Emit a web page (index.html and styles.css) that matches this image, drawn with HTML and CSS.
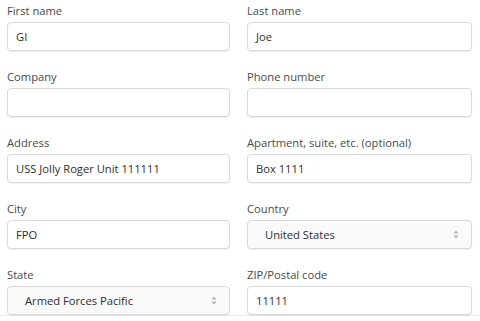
FILE: index.html
```html
<!DOCTYPE html>
<html>
<head>
<meta charset="utf-8">
<link rel="stylesheet" href="styles.css">
</head>
<body>
<div class="form">
  <div class="field"><label class="label">First name</label><div class="input">GI</div></div>
  <div class="field"><label class="label">Last name</label><div class="input">Joe</div></div>
  <div class="field"><label class="label">Company</label><div class="input"></div></div>
  <div class="field"><label class="label">Phone number</label><div class="input"></div></div>
  <div class="field"><label class="label">Address</label><div class="input">USS Jolly Roger Unit 111111</div></div>
  <div class="field"><label class="label">Apartment, suite, etc. (optional)</label><div class="input">Box 1111</div></div>
  <div class="field"><label class="label">City</label><div class="input">FPO</div></div>
  <div class="field"><label class="label">Country</label><div class="input select"><span>United States</span>
    <svg class="arrows" width="6" height="9" viewBox="0 0 6 9"><path d="M3 0.5L5.5 3.5H0.5Z M3 8.5L5.5 5.5H0.5Z" fill="#b5b5b5"/></svg></div></div>
  <div class="field"><label class="label">State</label><div class="input select"><span>Armed Forces Pacific</span>
    <svg class="arrows" width="6" height="9" viewBox="0 0 6 9"><path d="M3 0.5L5.5 3.5H0.5Z M3 8.5L5.5 5.5H0.5Z" fill="#b5b5b5"/></svg></div></div>
  <div class="field"><label class="label">ZIP/Postal code</label><div class="input">11111</div></div>
</div>
</body>
</html>
```
FILE: styles.css
```css
html, body {
  margin: 0;
  padding: 0;
  background: #ffffff;
}
body {
  font-family: "Open Sans", "Noto Sans", sans-serif;
  font-size: 11.2px;
  overflow: hidden;
}
.form {
  display: grid;
  grid-template-columns: 223px 225px;
  column-gap: 17px;
  row-gap: 15px;
  padding: 0 8px 0 7px;
  border-bottom: 1px solid #ececec;
  width: 465px;
}
.field {
  display: flex;
  flex-direction: column;
}
.label {
  display: block;
  height: 22px;
  line-height: 22px;
  color: #4a4a4a;
}
.input {
  box-sizing: border-box;
  height: 29px;
  border: 1px solid #d9d9d9;
  border-radius: 4px;
  background: #fff;
  color: #2e2e2e;
  padding: 0 8px;
  display: flex;
  align-items: center;
  box-shadow: 0 1px 1px rgba(0,0,0,0.06);
}
.select {
  background: #fafafa;
  padding-left: 17px;
  padding-right: 12px;
  justify-content: space-between;
}
.arrows {
  display: block;
}
```
